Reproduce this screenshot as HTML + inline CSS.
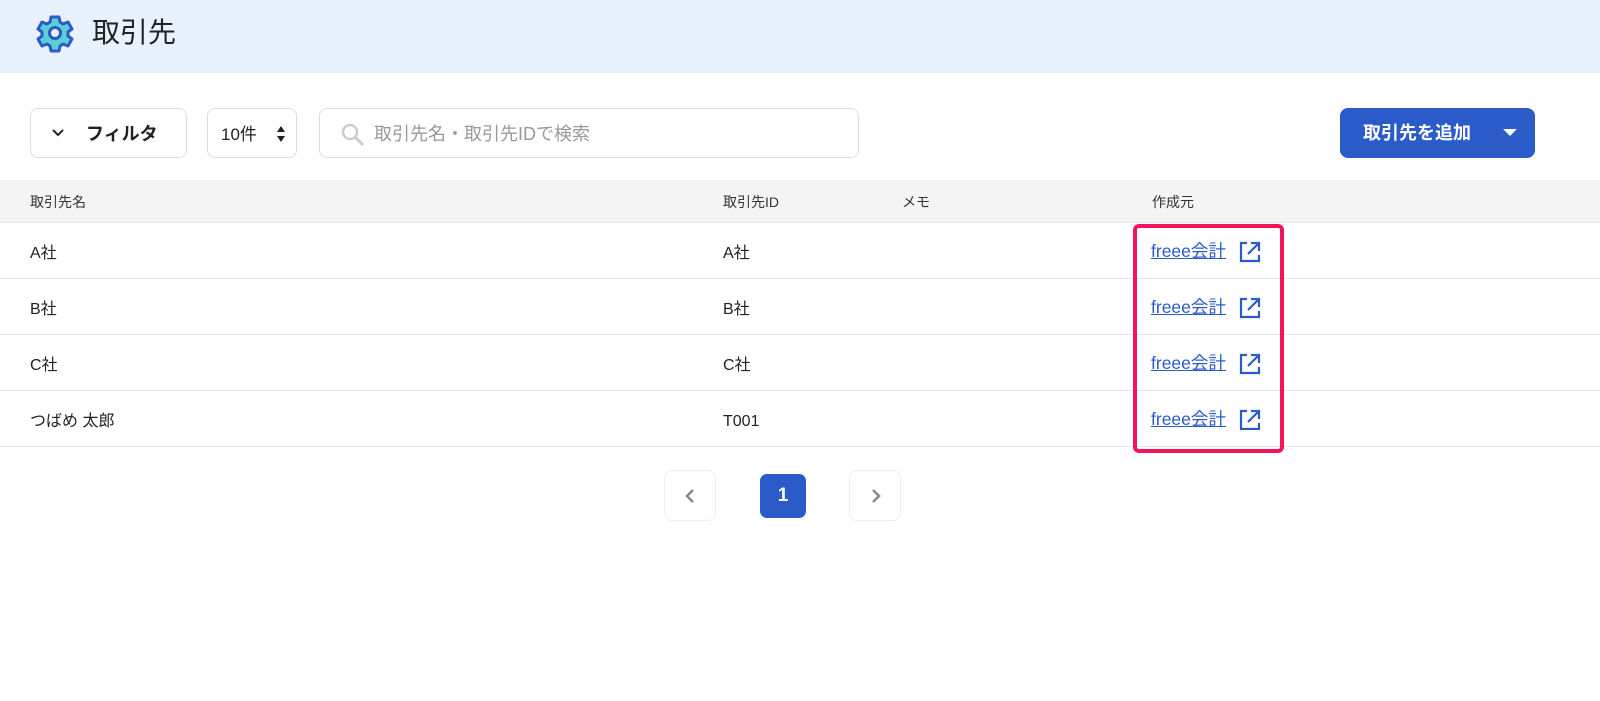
<!DOCTYPE html>
<html><head><meta charset="utf-8"><style>
*{box-sizing:border-box;margin:0;padding:0}
body{width:1600px;height:701px;background:#fff;font-family:"Liberation Sans","Noto Sans CJK JP",sans-serif;color:#222;position:relative;overflow:hidden;line-height:1}
.hdr{position:absolute;left:0;top:0;width:1600px;height:73px;background:#e9f1fd}
.hdr h1{position:absolute;left:92px;top:19px;font-size:28px;font-weight:400;color:#222;line-height:28px}
.abs{position:absolute;line-height:1}
.btn{position:absolute;border:1px solid #ddd;border-radius:8px;background:#fff}
.th{position:absolute;top:180px;left:0;width:1600px;height:43px;background:#f5f4f4;border-bottom:1px solid #e4e4e4}
.row{position:absolute;left:0;width:1600px;height:56px;border-bottom:1px solid #e4e4e4}
.cell{position:absolute;font-size:16px;line-height:18px}
.th .cell{font-size:14px;top:13px;color:#333}
.row .cell{top:22px}
a{color:#2a5bc8;text-decoration:underline;font-size:17.5px;line-height:18px}
</style></head><body>
<div class="hdr">
<svg class="abs" style="left:34px;top:12px" width="42" height="42" viewBox="0 0 42 42"><path d="M17 5h8l1 5 3 2 5-2 4 7-4 3v4l4 3-4 7-5-2-3 2-1 5h-8l-1-5-3-2-5 2-4-7 4-3v-4l-4-3 4-7 5 2 3-2z" fill="#5ccfd6" stroke="#2a5bc8" stroke-width="3" stroke-linejoin="round"/><circle cx="21" cy="21" r="5.5" fill="#e9f1fd" stroke="#2a5bc8" stroke-width="3"/></svg>
<h1>取引先</h1>
</div>
<div class="btn" style="left:30px;top:108px;width:157px;height:50px"><svg class="abs" style="left:20px;top:19px" width="14" height="10"><path d="M2 2l5 5 5-5" fill="none" stroke="#222" stroke-width="2"/></svg><span class="abs" style="left:55px;top:16px;font-size:18px;font-weight:700">フィルタ</span></div>
<div class="btn" style="left:207px;top:108px;width:90px;height:50px"><span class="abs" style="left:13px;top:17px;font-size:17px">10件</span><svg class="abs" style="left:69px;top:17px" width="8" height="16"><path d="M0 6L4 0 8 6z M0 10L4 16 8 10z" fill="#222"/></svg></div>
<div class="btn" style="left:319px;top:108px;width:540px;height:50px"><svg class="abs" style="left:20px;top:13px" width="26" height="26"><circle cx="10" cy="10" r="7" fill="none" stroke="#ccc" stroke-width="2.5"/><path d="M15 15l8 8" stroke="#ccc" stroke-width="3"/></svg><span class="abs" style="left:54px;top:16px;font-size:18px;color:#999">取引先名・取引先IDで検索</span></div>
<div class="abs" style="left:1340px;top:108px;width:195px;height:50px;background:#2a5bc8;border-radius:8px;color:#fff"><span class="abs" style="left:23px;top:16px;font-size:18px;font-weight:700">取引先を追加</span><svg class="abs" style="left:163px;top:21px" width="14" height="8"><path d="M0 0h14L7 7z" fill="#fff"/></svg></div>
<div class="th"><span class="cell" style="left:30px">取引先名</span><span class="cell" style="left:723px">取引先ID</span><span class="cell" style="left:902px">メモ</span><span class="cell" style="left:1152px">作成元</span></div>
<div class="row" style="top:223px"><span class="cell" style="left:30px">A社</span><span class="cell" style="left:723px">A社</span></div>
<div class="row" style="top:279px"><span class="cell" style="left:30px">B社</span><span class="cell" style="left:723px">B社</span></div>
<div class="row" style="top:335px"><span class="cell" style="left:30px">C社</span><span class="cell" style="left:723px">C社</span></div>
<div class="row" style="top:391px"><span class="cell" style="left:30px">つばめ 太郎</span><span class="cell" style="left:723px">T001</span></div>
<div class="abs" style="left:1151px;top:242px"><a>freee会計</a></div>
<div class="abs" style="left:1151px;top:298px"><a>freee会計</a></div>
<div class="abs" style="left:1151px;top:354px"><a>freee会計</a></div>
<div class="abs" style="left:1151px;top:410px"><a>freee会計</a></div>
<svg class="abs" style="left:1238px;top:240px" width="24" height="190"><g fill="none" stroke="#2a5bc8" stroke-width="2.2"><g id="i"><path d="M9 3H3v18h18v-6M13 3h8v8M21 3L10 14"/></g><use href="#i" y="56"/><use href="#i" y="112"/><use href="#i" y="168"/></g></svg>
<div class="abs" style="left:1133px;top:224px;width:151px;height:229px;border:4px solid #f5135a;border-radius:6px"></div>
<div class="btn" style="left:664px;top:470px;width:52px;height:51px;border-color:#eee"><svg class="abs" style="left:19px;top:17px" width="12" height="16"><path d="M9 2L3 8l6 6" fill="none" stroke="#888" stroke-width="2.5"/></svg></div>
<div class="abs" style="left:760px;top:474px;width:46px;height:44px;background:#2a5bc8;border-radius:7px;color:#fff;font-weight:700;font-size:19px;text-align:center;line-height:44px">1</div>
<div class="btn" style="left:849px;top:470px;width:52px;height:51px;border-color:#eee"><svg class="abs" style="left:20px;top:17px" width="12" height="16"><path d="M3 2l6 6-6 6" fill="none" stroke="#888" stroke-width="2.5"/></svg></div>
</body></html>
